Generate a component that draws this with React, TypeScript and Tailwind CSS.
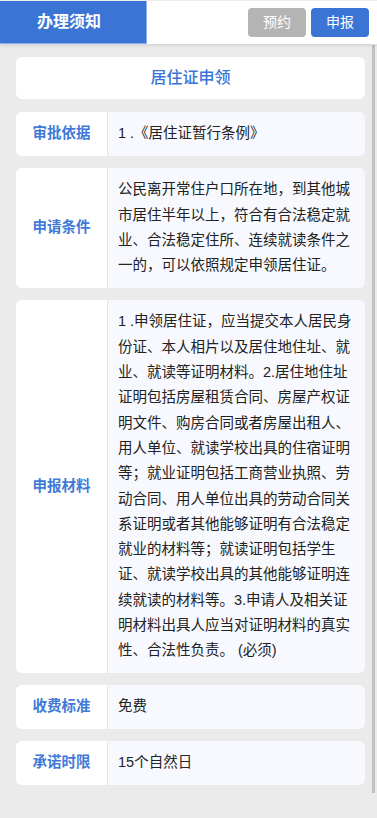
const rows = [
  { label: '审批依据', value: '1 .《居住证暂行条例》' },
  {
    label: '申请条件',
    value:
      '公民离开常住户口所在地，到其他城市居住半年以上，符合有合法稳定就业、合法稳定住所、连续就读条件之一的，可以依照规定申领居住证。',
  },
  {
    label: '申报材料',
    value:
      '1 .申领居住证，应当提交本人居民身份证、本人相片以及居住地住址、就业、就读等证明材料。2.居住地住址证明包括房屋租赁合同、房屋产权证明文件、购房合同或者房屋出租人、用人单位、就读学校出具的住宿证明等；就业证明包括工商营业执照、劳动合同、用人单位出具的劳动合同关系证明或者其他能够证明有合法稳定就业的材料等；就读证明包括学生证、就读学校出具的其他能够证明连续就读的材料等。3.申请人及相关证明材料出具人应当对证明材料的真实性、合法性负责。 (必须)',
  },
  { label: '收费标准', value: '免费' },
  { label: '承诺时限', value: '15个自然日' },
]

export default function App() {
  return (
    <div className="flex min-h-screen flex-col bg-[#ebebeb] font-['Liberation_Sans','Noto_Sans_CJK_SC',sans-serif]">
      {/* header */}
      <header className="relative z-10 flex h-[44px] items-center border-t border-[#ececec] bg-white shadow-[0_1px_4px_rgba(0,0,0,0.14)]">
        <div className="flex h-full w-[147px] items-center border-r border-b border-[#8fb1ea] bg-[#3a75d6] pl-[37px] text-[16px] font-bold text-white">
          办理须知
        </div>
        <div className="ml-auto mr-[8px] flex gap-[5px]">
          <button className="h-[29px] w-[58px] rounded-[4px] bg-[#b4b4b4] text-[14px] text-white">
            预约
          </button>
          <button className="h-[29px] w-[58px] rounded-[4px] bg-[#3a75d6] text-[14px] text-white">
            申报
          </button>
        </div>
      </header>

      <div className="flex flex-1">
        <main className="flex-1 pt-[13px] pb-[34px] pl-4 pr-[7px]">
          <div className="flex h-[42px] items-center justify-center rounded-[6px] bg-white text-[16px] font-medium text-[#3a75d6]">
            居住证申领
          </div>

          <div className="mt-[13px] space-y-[12px]">
            {rows.map((row) => (
              <div key={row.label} className="flex overflow-hidden rounded-[6px]">
                <div className="flex w-[91px] shrink-0 items-center justify-center bg-white text-[14.5px] font-semibold text-[#4179d8]">
                  {row.label}
                </div>
                <div className="flex-1 border-l border-[#e4e4e4] bg-[#f7f9fe] py-[9.4px] pr-[8px] pl-[10px] text-[14.5px] leading-[25.3px] text-[#222]">
                  {row.value}
                </div>
              </div>
            ))}
          </div>
        </main>

        {/* scrollbar thumb */}
        <div className="w-[5px] shrink-0 pt-[1px]">
          <div className="h-[748px] w-[3px] bg-[#c1c1c1]" />
        </div>
      </div>
    </div>
  )
}
